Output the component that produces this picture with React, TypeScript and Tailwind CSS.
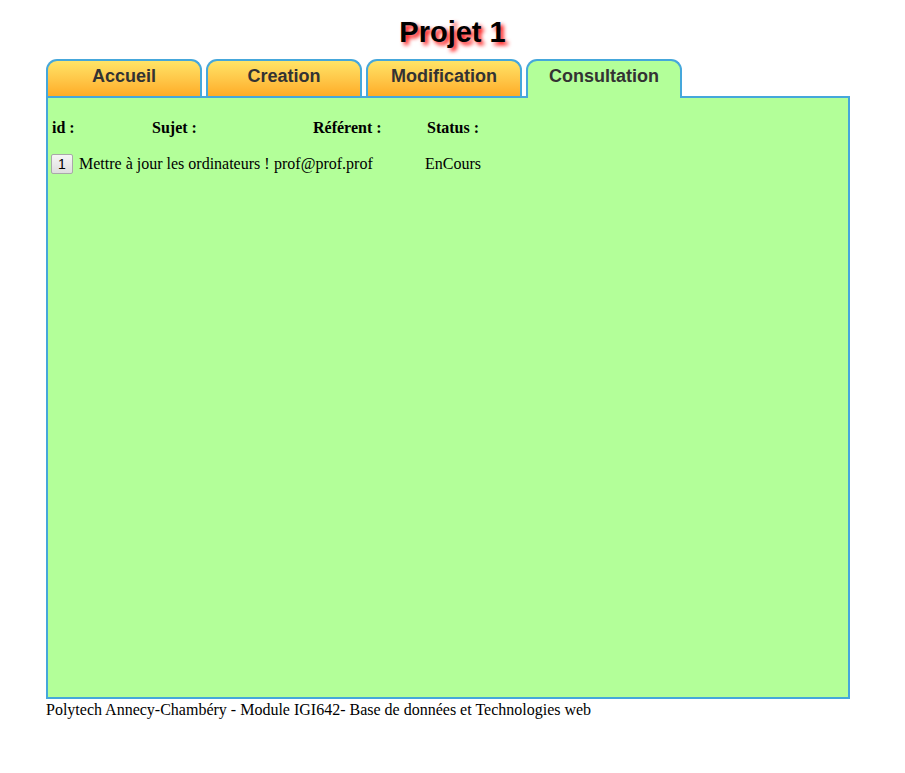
import React from "react";

const tabs = ["Accueil", "Creation", "Modification", "Consultation"];

export default function App() {
  return (
    <div className="min-h-[773px] bg-white" style={{ fontFamily: '"Liberation Serif", serif' }}>
      <div className="pt-[14px] h-[59px] text-center">
        <h1
          className="m-0 text-[29px] leading-[36px] font-bold text-black"
          style={{ fontFamily: '"Liberation Sans", Arial, sans-serif', textShadow: "3px 3px 4px #ff0000" }}
        >
          Projet 1
        </h1>
      </div>
      <div className="ml-[46px] w-[804px]">
        <div className="flex gap-[4px] h-[37px] relative z-10">
          {tabs.map((t, i) => {
            const active = i === 3;
            return (
              <div
                key={t}
                className={
                  "w-[156px] rounded-t-[11px] border-2 border-[#45a7db] text-center text-[18px] font-bold text-[#333] leading-[31px] " +
                  (active
                    ? "border-b-0 h-[39px] bg-[#b3ff99]"
                    : "border-b-0 h-[37px] bg-gradient-to-b from-[#ffe466] to-[#ffac24]")
                }
                style={{ fontFamily: '"Liberation Sans", Arial, sans-serif' }}
              >
                {t}
              </div>
            );
          })}
        </div>
        <div className="h-[603px] border-2 border-[#45a7db] bg-[#b3ff99] text-[16px] text-black">
          <div className="pl-[3px] pt-[21px] grid grid-cols-[28px_195px_151px_1fr]">
            <div className="pl-[1px] font-bold leading-[18px]">id :</div>
            <div className="pl-[73px] font-bold leading-[18px]">Sujet :</div>
            <div className="pl-[39px] font-bold leading-[18px]">Référent :</div>
            <div className="pl-[2px] font-bold leading-[18px]">Status :</div>
          </div>
          <div className="pl-[3px] pt-[15px] grid grid-cols-[28px_195px_151px_1fr] items-center">
            <div>
              <button
                className="w-[22px] h-[20px] rounded-[2px] border border-[#a9a9a9] bg-gradient-to-b from-[#f6f6f6] to-[#dedede] text-[14px] leading-[18px] text-black"
                style={{ fontFamily: '"Liberation Sans", Arial, sans-serif' }}
              >
                1
              </button>
            </div>
            <div className="leading-[20px] whitespace-nowrap">Mettre à jour les ordinateurs !</div>
            <div className="leading-[20px]">prof@prof.prof</div>
            <div className="leading-[20px]">EnCours</div>
          </div>
        </div>
        <div className="text-[16px] leading-[20px] mt-[1px] text-black">
          Polytech Annecy-Chambéry - Module IGI642- Base de données et Technologies web
        </div>
      </div>
    </div>
  );
}
